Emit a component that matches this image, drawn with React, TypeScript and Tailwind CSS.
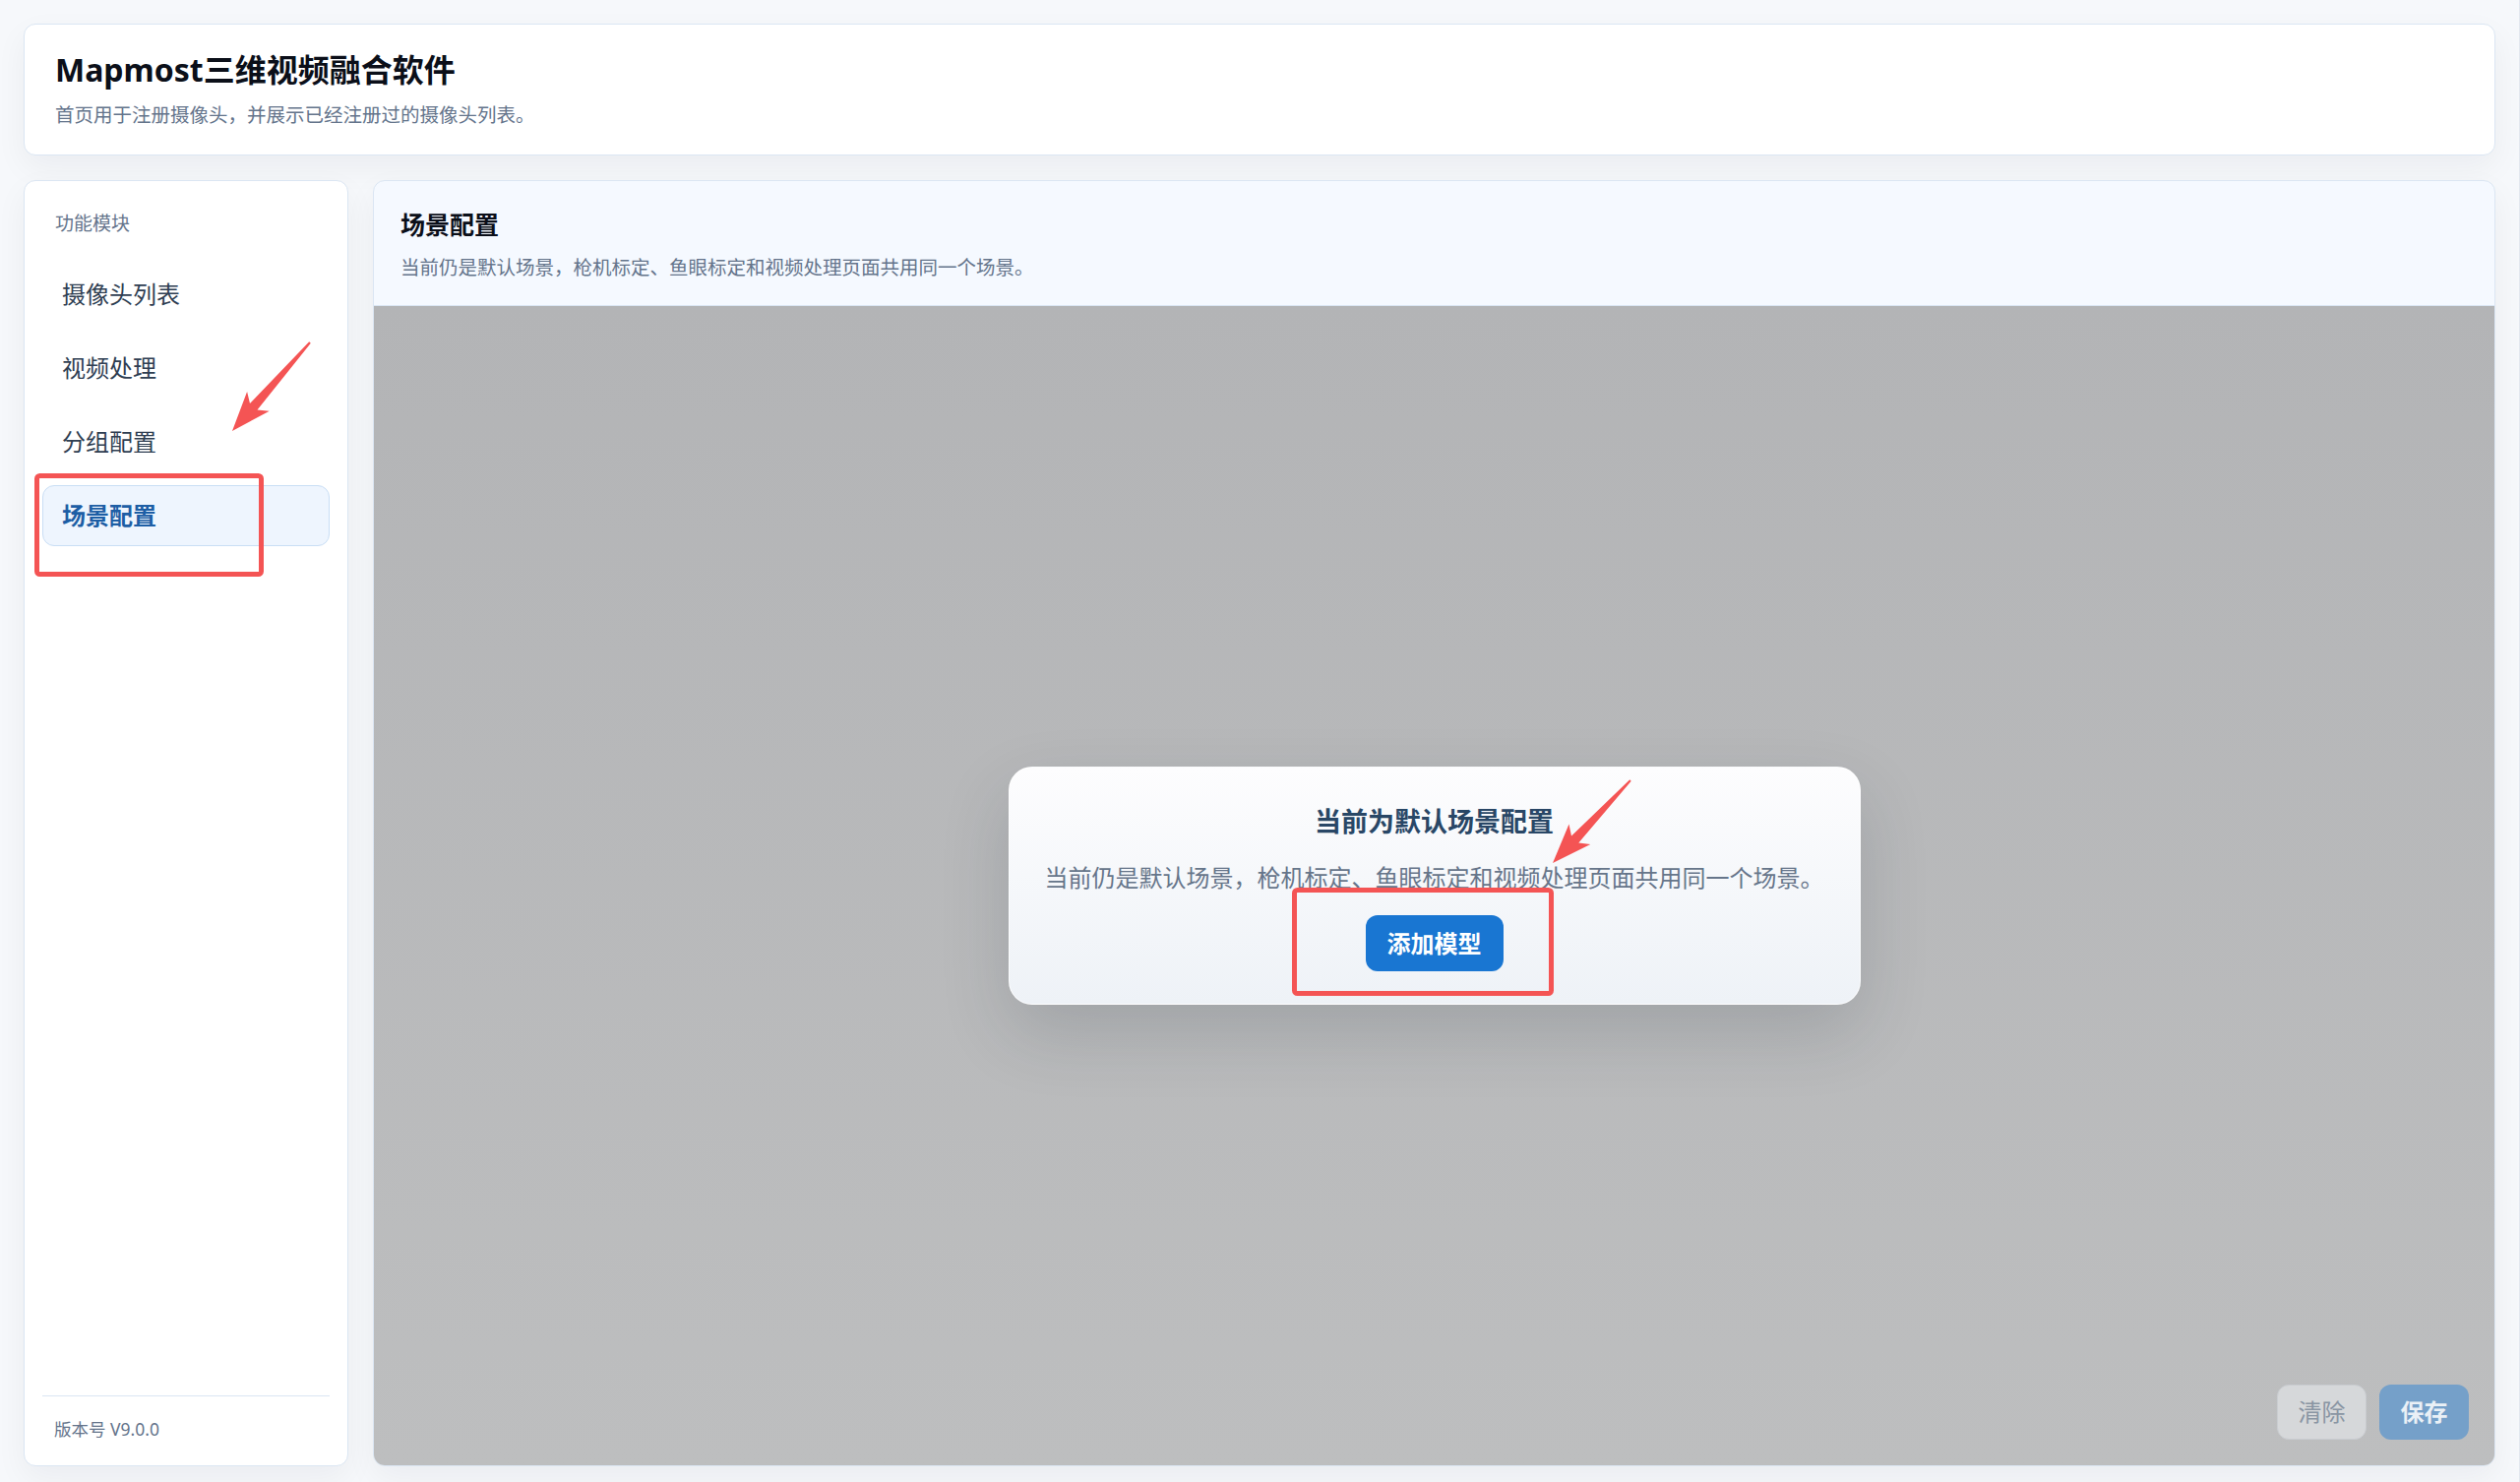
import type { ReactNode } from 'react';

// ------------------------------------------------------------
// Mapmost 三维视频融合软件 — 场景配置 page
// ------------------------------------------------------------

const FONT = '"Noto Sans", "Noto Sans CJK SC", sans-serif';

const NAV_ITEMS = ['摄像头列表', '视频处理', '分组配置', '场景配置'];
const ACTIVE = '场景配置';

const SCENE_HINT = '当前仍是默认场景，枪机标定、鱼眼标定和视频处理页面共用同一个场景。';

// Tapered annotation arrow, drawn from tail to tip
function arrowPoints(tail: [number, number], tip: [number, number]) {
    const [tx, ty] = tail;
    const [px, py] = tip;
    const len = Math.hypot(tx - px, ty - py);
    const ax = (tx - px) / len;
    const ay = (ty - py) / len;
    const nx = -ay;
    const ny = ax;
    const at = (s: number, w: number) =>
        `${(px + ax * s + nx * w).toFixed(1)},${(py + ay * s + ny * w).toFixed(1)}`;
    return [
        at(0, 0),
        at(40, 15),
        at(33, 5),
        at(len, 1),
        at(len, -1),
        at(33, -5),
        at(40, -15),
    ].join(' ');
}

function Card({ children, className = '' }: { children: ReactNode; className?: string }) {
    return (
        <div
            className={`rounded-xl border border-[#dbe6f3] shadow-[0_12px_32px_rgba(15,23,42,0.05)] ${className}`}
        >
            {children}
        </div>
    );
}

function Sidebar() {
    return (
        <Card className="w-[330px] shrink-0 bg-white flex flex-col px-[18px]">
            <div className="pt-[30px] pl-[13px] text-[19px] leading-[26px] text-[#64748b]">功能模块</div>

            <nav className="mt-[28px] flex flex-col gap-[13px]">
                {NAV_ITEMS.map((name) => {
                    const isActive = name === ACTIVE;
                    return (
                        <div
                            key={name}
                            className={`h-[62px] flex items-center pl-[19px] rounded-xl border text-[24px] ${
                                isActive
                                    ? 'border-[#c9def5] bg-[#eef5fe] text-[#1d5ea5] font-bold'
                                    : 'border-transparent text-[#2f3e52] font-normal'
                            }`}
                        >
                            {name}
                        </div>
                    );
                })}
            </nav>

            <div className="mt-auto border-t border-[#dbe6f3] pt-[21px] pb-[25px] pl-[12px] text-[17.5px] leading-[24px] text-[#64748b]">
                版本号 V9.0.0
            </div>
        </Card>
    );
}

function SceneDialog() {
    return (
        <div className="w-[866px] rounded-[24px] border border-white/70 bg-gradient-to-b from-[#fdfdfe] to-[#eef2f7] pt-[37px] pb-[33px] flex flex-col items-center shadow-[0_28px_70px_rgba(30,41,59,0.16)]">
            <h3 className="text-[27px] leading-[36px] font-bold text-[#294766]">当前为默认场景配置</h3>
            <p className="mt-[22px] text-[24px] leading-[34px] text-[#66758a]">{SCENE_HINT}</p>
            <button className="mt-[21px] h-[57px] px-[22px] rounded-[12px] bg-[#1976d2] text-white text-[24px] font-bold">
                添加模型
            </button>
        </div>
    );
}

export default function App() {
    return (
        <div
            className="relative w-[2561px] h-[1506px] overflow-hidden bg-[#f6f8fb] border-r border-[#e3e8ef] pl-6 pr-6 pt-6 pb-4 flex flex-col gap-[25px]"
            style={{ fontFamily: FONT }}
        >
            {/* Title bar */}
            <Card className="bg-white pl-[31px] pt-6 pb-[26px] flex flex-col gap-[10px]">
                <h1 className="text-[32px] leading-[44px] font-bold text-[#0b0f19]">Mapmost三维视频融合软件</h1>
                <p className="text-[19.5px] leading-[28px] text-[#64748b]">
                    首页用于注册摄像头，并展示已经注册过的摄像头列表。
                </p>
            </Card>

            <div className="flex-1 min-h-0 flex gap-[25px]">
                <Sidebar />

                {/* Scene panel */}
                <Card className="flex-1 min-w-0 flex flex-col overflow-hidden bg-[#f5f9ff]">
                    <div className="border-b border-[#dbe6f3] pl-[27px] pt-[27px] pb-[24px] flex flex-col gap-[13px]">
                        <h2 className="text-[25px] leading-[34px] font-bold text-[#0b0f19]">场景配置</h2>
                        <p className="text-[19.5px] leading-[28px] text-[#64748b]">{SCENE_HINT}</p>
                    </div>

                    <div className="relative flex-1 min-h-0 bg-gradient-to-b from-[#b3b4b6] to-[#bdbebf] flex items-center justify-center">
                        <SceneDialog />

                        <div className="absolute right-[26px] bottom-[26px] flex gap-[13px]">
                            <button className="w-[91px] h-[56px] rounded-[12px] border border-[#c9ccd0] bg-[#d6d8da] text-[24px] text-[#8995a3]">
                                清除
                            </button>
                            <button className="w-[91px] h-[56px] rounded-[12px] bg-[#75a0c9] text-[24px] font-bold text-[#eaf0f6]">
                                保存
                            </button>
                        </div>
                    </div>
                </Card>
            </div>

            {/* Red markup over the page */}
            <svg
                className="absolute inset-0 pointer-events-none"
                width="2561"
                height="1506"
                viewBox="0 0 2561 1506"
            >
                <rect x="37.5" y="483.5" width="228" height="100" rx="3" fill="none" stroke="#f45454" strokeWidth="5" />
                <rect x="1315.5" y="904.5" width="261" height="105" rx="3" fill="none" stroke="#f45454" strokeWidth="5" />
                <polygon points={arrowPoints([315, 348], [236, 438])} fill="#f45454" />
                <polygon points={arrowPoints([1657, 793], [1578, 877])} fill="#f45454" />
            </svg>
        </div>
    );
}
